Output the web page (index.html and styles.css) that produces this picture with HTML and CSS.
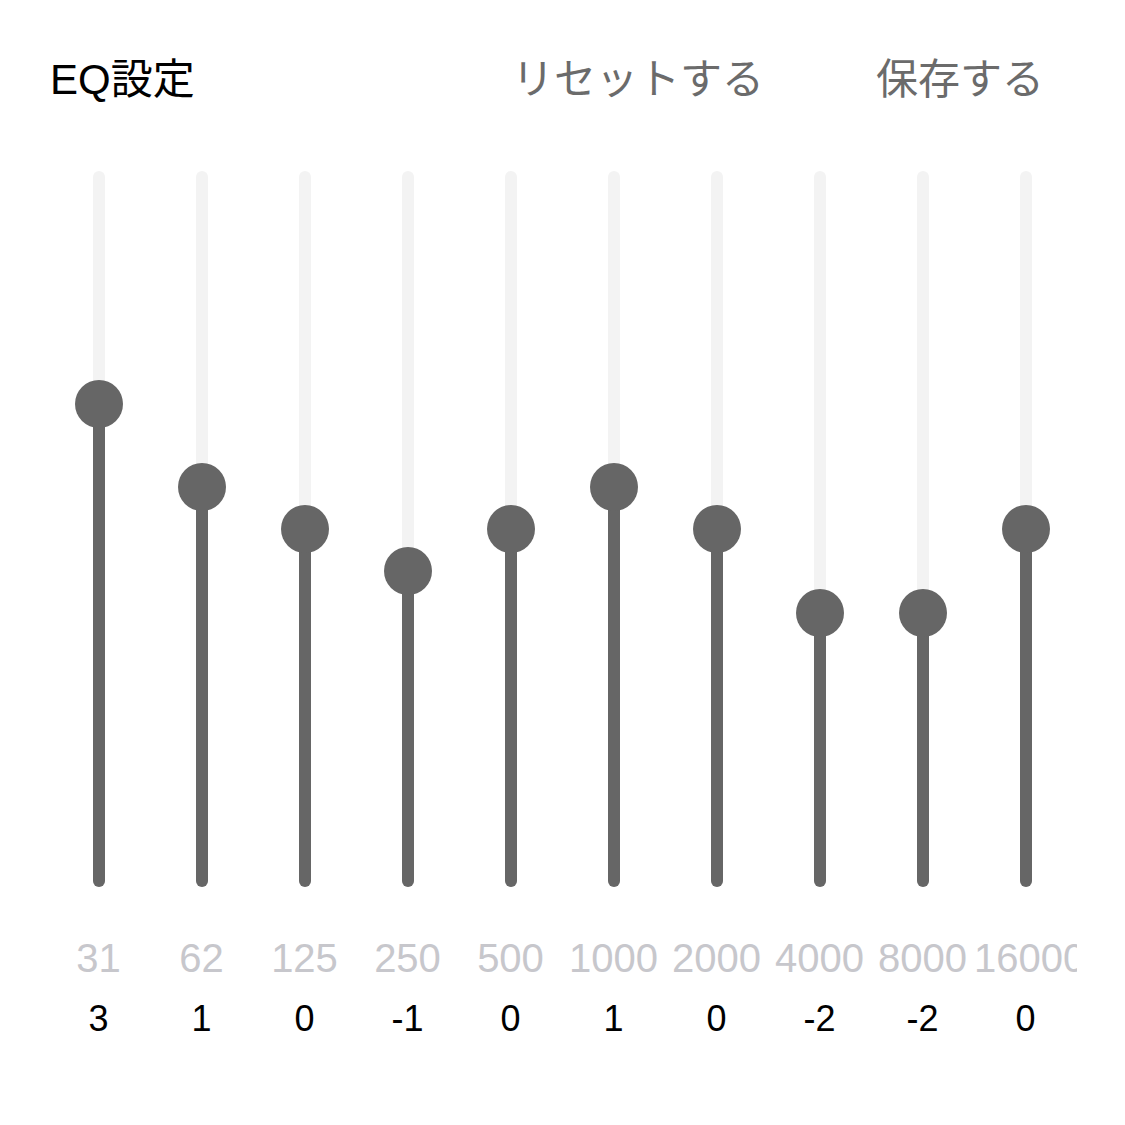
FILE: index.html
```html
<!DOCTYPE html>
<html lang="ja">
<head>
  <meta charset="UTF-8" />
  <meta name="viewport" content="width=device-width, initial-scale=1" />
  <title>EQ設定</title>
  <link rel="stylesheet" href="styles.css">
</head>
<body>

<main class="eq">
  <header class="eq-header">
    <h1>EQ設定</h1>
    <button type="button" class="link-btn btn-reset">リセットする</button>
    <button type="button" class="link-btn btn-save">保存する</button>
  </header>

  <!-- gain per band, range -8 .. 8 -->
  <section class="bands">
    <div class="band">
      <div class="slider" style="--v: 3"><div class="track"></div><div class="fill"></div><div class="thumb"></div></div>
      <div class="freq">31</div>
      <div class="gain">3</div>
    </div>
    <div class="band">
      <div class="slider" style="--v: 1"><div class="track"></div><div class="fill"></div><div class="thumb"></div></div>
      <div class="freq">62</div>
      <div class="gain">1</div>
    </div>
    <div class="band">
      <div class="slider" style="--v: 0"><div class="track"></div><div class="fill"></div><div class="thumb"></div></div>
      <div class="freq">125</div>
      <div class="gain">0</div>
    </div>
    <div class="band">
      <div class="slider" style="--v: -1"><div class="track"></div><div class="fill"></div><div class="thumb"></div></div>
      <div class="freq">250</div>
      <div class="gain">-1</div>
    </div>
    <div class="band">
      <div class="slider" style="--v: 0"><div class="track"></div><div class="fill"></div><div class="thumb"></div></div>
      <div class="freq">500</div>
      <div class="gain">0</div>
    </div>
    <div class="band">
      <div class="slider" style="--v: 1"><div class="track"></div><div class="fill"></div><div class="thumb"></div></div>
      <div class="freq">1000</div>
      <div class="gain">1</div>
    </div>
    <div class="band">
      <div class="slider" style="--v: 0"><div class="track"></div><div class="fill"></div><div class="thumb"></div></div>
      <div class="freq">2000</div>
      <div class="gain">0</div>
    </div>
    <div class="band">
      <div class="slider" style="--v: -2"><div class="track"></div><div class="fill"></div><div class="thumb"></div></div>
      <div class="freq">4000</div>
      <div class="gain">-2</div>
    </div>
    <div class="band">
      <div class="slider" style="--v: -2"><div class="track"></div><div class="fill"></div><div class="thumb"></div></div>
      <div class="freq">8000</div>
      <div class="gain">-2</div>
    </div>
    <div class="band">
      <div class="slider" style="--v: 0"><div class="track"></div><div class="fill"></div><div class="thumb"></div></div>
      <div class="freq">16000</div>
      <div class="gain">0</div>
    </div>
  </section>
</main>

</body>
</html>
```

FILE: styles.css
```css
* { margin: 0; padding: 0; box-sizing: border-box; }

body {
  font-family: 'Liberation Sans', 'Noto Sans CJK JP', sans-serif;
  background: #fff;
  color: #000;
}

.eq-header {
  display: flex;
  align-items: baseline;
  padding: 55px 81px 0 50px;
  font-size: 42px;
  line-height: 50px;
}

.eq-header h1 {
  font-size: 42px;
  font-weight: normal;
}

.link-btn {
  background: none;
  border: none;
  font: inherit;
  color: #6b6b6b;
  cursor: pointer;
}

.btn-reset { margin-left: auto; margin-right: 112px; }

.bands {
  display: grid;
  grid-template-columns: repeat(10, 103px);
  padding-left: 47px;
  margin-top: 66px;
}

.band {
  display: flex;
  flex-direction: column;
  align-items: center;
  width: 103px;
}

/* thumb travel is the track minus one thumb height */
.slider {
  position: relative;
  width: 48px;
  height: 716px;
  display: flex;
  justify-content: center;
  --pos: calc((8 - var(--v)) / 16 * (100% - 48px));
}

.track {
  width: 12px;
  height: 100%;
  border-radius: 6px;
  background: #f3f3f3;
}

.fill {
  position: absolute;
  left: 18px;
  width: 12px;
  top: calc(24px + var(--pos));
  bottom: 0;
  border-radius: 0 0 6px 6px;
  background: #666;
}

.thumb {
  position: absolute;
  left: 0;
  top: var(--pos);
  width: 48px;
  height: 48px;
  border-radius: 50%;
  background: #666;
}

.freq {
  width: 100%;
  margin-top: 47px;
  font-size: 40px;
  line-height: 48px;
  color: #c7c7cc;
  text-align: center;
  white-space: nowrap;
  overflow: hidden;
}

.gain {
  margin-top: 15px;
  font-size: 36px;
  line-height: 44px;
  color: #000;
}
```
